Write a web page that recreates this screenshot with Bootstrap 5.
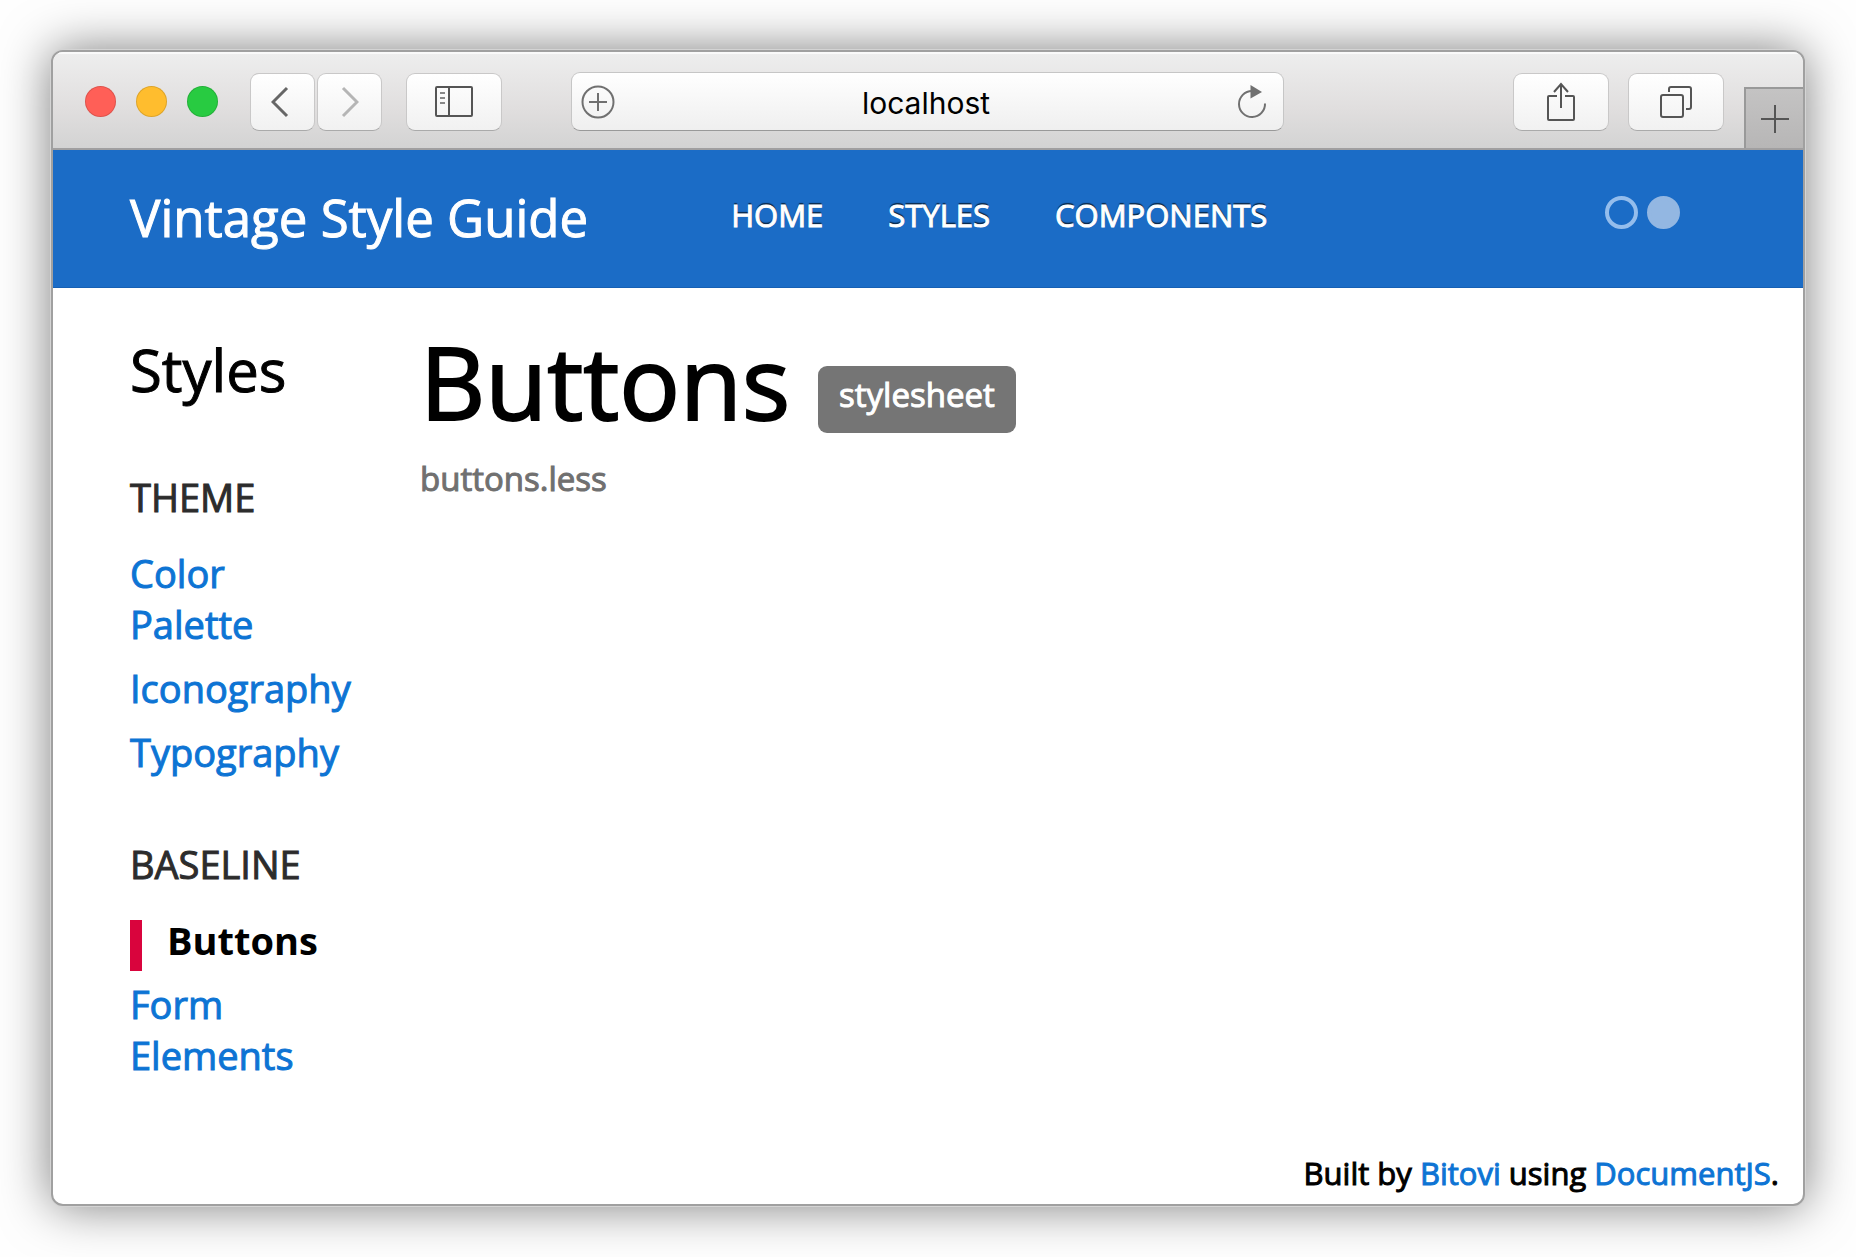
<!DOCTYPE html>
<html lang="en">
<head>
<meta charset="utf-8">
<meta name="viewport" content="width=device-width, initial-scale=1">
<title>Vintage Style Guide - Buttons</title>
<link href="https://cdn.jsdelivr.net/npm/bootstrap@5.3.0/dist/css/bootstrap.min.css" rel="stylesheet">
<style>
  body { font-family: "Open Sans", "Noto Sans", sans-serif; color: #000; background: #fefefe; }
  a { color: #0d74d4; text-decoration: none; }
  .desk { min-height: 100vh; padding: 50px 51px 51px; }
  .browser { border: 2px solid #a0a0a0; border-radius: 12px; background: #fff; box-shadow: 0 0 0 1px #d4d4d4, 0 0 50px rgba(0,0,0,.52); overflow: hidden; }
  /* medium weight for the site's type */
  .site-head a, .side, .doc, .credits { -webkit-text-stroke: 1px; }

  /* browser chrome */
  .chrome { height: 98px; background: linear-gradient(#eee, #e0dede 60%, #d3d3d3); border-bottom: 2px solid #a09fa0; box-shadow: inset 0 2px 0 #fafafa; padding: 3px 0 0 32px; }
  .light { width: 31px; height: 31px; border-radius: 50%; border: 1px solid rgba(0,0,0,.13); padding: 0; }
  .tool { height: 58px; width: 96px; padding: 0; border: 1px solid #c9c8c8; border-bottom-color: #aaa; border-radius: 9px; background: linear-gradient(#fff, #f1f1f1); display: flex; align-items: center; justify-content: center; }
  .tool-nav { width: 65px; }
  .tool-back { padding-right: 6px; }
  .tool svg, .plus-tab svg, .address svg { fill: none; stroke: #555; stroke-width: 2; }
  .address { height: 59px; width: 713px; border: 1px solid #c6c6c6; border-bottom-color: #999; border-radius: 9px; background: linear-gradient(#fff, #efefef); padding: 0 16px 0 9px; margin-left: 69px; }
  .address input { border: 0; background: none; text-align: center; font: 400 30px Inter, sans-serif; color: #000; min-width: 0; padding: 3px 0 0; }
  .address button { border: 0; background: none; padding: 0; display: flex; }
  .plus-tab { width: 59px; height: 61px; border: 0; border-left: 2px solid #999; border-top: 2px solid #999; background: linear-gradient(#c4c3c3, #b7b6b6); padding: 0; margin-left: 20px; }

  /* site header */
  .site-head { height: 138px; background: #1b6cc6; border-bottom: 1px solid #1660b4; padding: 0 123px 0 77px; }
  .brand { font-size: 51px; line-height: 68px; color: #fff; padding-bottom: 4px; }
  .menu { margin-left: 143px; gap: 65px; padding-bottom: 8px; }
  .menu a { font-size: 31px; line-height: 46px; color: #fff; text-shadow: 0 -2px 1px rgba(0,0,0,.65); }
  .switch { gap: 9px; padding-bottom: 12px; }
  .switch button { width: 33px; height: 33px; border: 4px solid #94bdec; border-radius: 50%; background: none; padding: 0; }
  .switch .filled { background: #93b7e2; border-color: #93b7e2; }

  /* content */
  .side { width: 290px; padding-top: 48px; }
  .side h2 { font-size: 58px; line-height: 68px; font-weight: 400; margin: 0 0 68px; }
  .side h3 { font-size: 38px; line-height: 51px; font-weight: 400; color: #2c2c2c; margin: 0 0 25px; }
  .side ul { margin: 0 0 61px; display: flex; flex-direction: column; gap: 13px; }
  .side li { font-size: 38px; line-height: 51px; width: 230px; }
  .side .narrow { width: 190px; }
  .side .current { position: relative; padding-left: 37px; color: #000; font-weight: 700; -webkit-text-stroke: 0; }
  .side .current::before { content: ""; position: absolute; left: 0; top: 5px; bottom: -5px; width: 12px; background: #d9043d; }
  .doc { padding-top: 33px; }
  .doc h1 { font-size: 101px; line-height: 120px; font-weight: 400; margin: 0; -webkit-text-stroke: 2px; }
  .tag { background: #757575; color: #fff; border-radius: 9px; font-size: 33px; line-height: 50px; padding: 4px 21px 13px; margin: 0 0 8px 28px; }
  .file { font-size: 33px; line-height: 50px; color: #707070; margin: 13px 0 0; }
  .credits { font-size: 31px; line-height: 46px; padding: 0 24px 8px; }
</style>
<script src="https://cdn.jsdelivr.net/npm/bootstrap@5.3.0/dist/js/bootstrap.bundle.min.js"></script>
</head>
<body>
<div class="desk d-flex">
  <div class="browser flex-grow-1 d-flex flex-column">
    <div class="chrome d-flex align-items-center">
      <div class="d-flex" style="gap:20px">
        <button class="light" style="background:#ff5f57" aria-label="Close"></button>
        <button class="light" style="background:#ffbd2e" aria-label="Minimize"></button>
        <button class="light" style="background:#28cb41" aria-label="Zoom"></button>
      </div>
      <div class="d-flex" style="gap:2px;margin-left:32px">
        <button class="tool tool-nav tool-back" aria-label="Back"><svg width="18" height="32" viewBox="0 0 18 32"><path d="M16 2 2 16l14 14" style="stroke:#666;stroke-width:3"/></svg></button>
        <button class="tool tool-nav" aria-label="Forward"><svg width="18" height="32" viewBox="0 0 18 32"><path d="M2 2l14 14L2 30" style="stroke:#b5b5b5;stroke-width:3"/></svg></button>
      </div>
      <button class="tool" style="margin-left:24px" aria-label="Sidebar"><svg width="38" height="31" viewBox="0 0 38 31"><rect x="1" y="1" width="36" height="29" rx="1"/><path d="M14 1v29"/><path d="M5 7h5M5 12h5M5 17h5" style="stroke:#888"/></svg></button>
      <div class="address d-flex align-items-center">
        <button aria-label="Add bookmark"><svg width="34" height="34" viewBox="0 0 34 34" style="stroke:#707070"><circle cx="17" cy="17" r="15.5"/><path d="M17 8v18M8 17h18"/></svg></button>
        <input class="flex-grow-1" type="text" value="localhost" aria-label="Address">
        <button aria-label="Reload"><svg width="30" height="34" viewBox="0 0 30 34" style="stroke:#707070"><path d="M15 6A13 13 0 1 0 28 18.500"/><path d="M13.500 0v13.500L25 7z" style="fill:#707070;stroke:none"/></svg></button>
      </div>
      <button class="tool ms-auto" aria-label="Share"><svg width="30" height="40" viewBox="0 0 30 40"><path d="M11 14H3q-1 0-1 1v22q0 1 1 1h24q1 0 1-1V15q0-1-1-1h-8M15 26V2M8 10l7-8 7 8"/></svg></button>
      <button class="tool" style="margin-left:19px" aria-label="Tabs"><svg width="32" height="32" viewBox="0 0 32 32"><rect x="1" y="9" width="22" height="22" rx="2"/><path d="M9 6V3q0-2 2-2h18q2 0 2 2v18q0 2-2 2h-3"/></svg></button>
      <button class="plus-tab align-self-end" aria-label="New tab"><svg width="28" height="28" viewBox="0 0 28 28"><path d="M14 0v28M0 14h28"/></svg></button>
    </div>

    <header class="site-head d-flex align-items-center">
      <a class="brand" href="#">Vintage Style Guide</a>
      <nav class="menu d-flex">
        <a href="#">HOME</a>
        <a href="#">STYLES</a>
        <a href="#">COMPONENTS</a>
      </nav>
      <div class="switch d-flex ms-auto">
        <button aria-label="Outline view"></button>
        <button class="filled" aria-label="Solid view"></button>
      </div>
    </header>

    <div class="d-flex flex-grow-1" style="padding-left:77px">
      <aside class="side flex-shrink-0">
        <h2>Styles</h2>
        <h3>THEME</h3>
        <ul class="list-unstyled">
          <li class="narrow"><a href="#">Color Palette</a></li>
          <li><a href="#">Iconography</a></li>
          <li><a href="#">Typography</a></li>
        </ul>
        <h3>BASELINE</h3>
        <ul class="list-unstyled mb-0">
          <li class="current">Buttons</li>
          <li class="narrow"><a href="#">Form Elements</a></li>
        </ul>
      </aside>
      <main class="doc flex-grow-1">
        <div class="d-flex align-items-end">
          <h1>Buttons</h1>
          <span class="tag">stylesheet</span>
        </div>
        <p class="file">buttons.less</p>
      </main>
    </div>

    <footer class="credits text-end">Built by <a href="#">Bitovi</a> using <a href="#">DocumentJS</a>.</footer>
  </div>
</div>
</body>
</html>
